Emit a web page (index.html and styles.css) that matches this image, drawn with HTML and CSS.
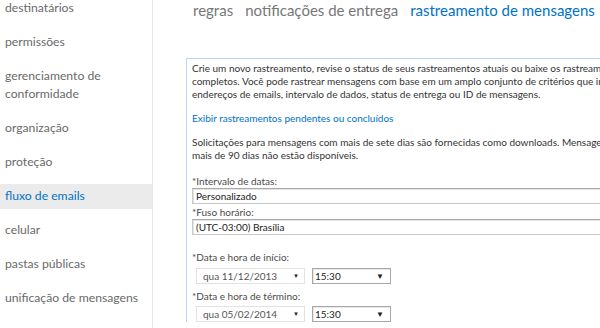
FILE: index.html
```html
<!DOCTYPE html>
<html lang="pt-BR">
  <head>
    <meta charset="UTF-8" />
    <meta name="viewport" content="width=device-width, initial-scale=1.0" />
    <title>fluxo de emails - rastreamento de mensagens</title>
    <link rel="stylesheet" href="styles.css">
  </head>
  <body>
    <div class="page">
      <nav class="sidebar">
        <ul class="nav-list">
          <li class="nav-item">destinatários</li>
          <li class="nav-item">permissões</li>
          <li class="nav-item">gerenciamento de conformidade</li>
          <li class="nav-item">organização</li>
          <li class="nav-item">proteção</li>
          <li class="nav-item selected">fluxo de emails</li>
          <li class="nav-item">celular</li>
          <li class="nav-item">pastas públicas</li>
          <li class="nav-item">unificação de mensagens</li>
        </ul>
      </nav>

      <main class="content">
        <div class="tabs">
          <span class="tab">regras</span>
          <span class="tab">notificações de entrega</span>
          <span class="tab active">rastreamento de mensagens</span>
        </div>

        <div class="panel">
          <p>Crie um novo rastreamento, revise o status de seus rastreamentos atuais ou baixe os rastreamentos completos. Você pode rastrear mensagens com base em um amplo conjunto de critérios que incluem endereços de emails, intervalo de dados, status de entrega ou ID de mensagens.</p>

          <p><a href="#" class="link">Exibir rastreamentos pendentes ou concluídos</a></p>

          <p>Solicitações para mensagens com mais de sete dias são fornecidas como downloads. Mensagens com mais de 90 dias não estão disponíveis.</p>

          <div class="field">
            <label>*Intervalo de datas:</label>
            <div class="textbox">Personalizado</div>
          </div>

          <div class="field">
            <label>*Fuso horário:</label>
            <div class="textbox">(UTC-03:00) Brasília</div>
          </div>

          <div class="field date-field first">
            <label>*Data e hora de início:</label>
            <div class="date-row">
              <div class="dropdown date">qua 11/12/2013<span class="arrow small">&#9660;</span></div>
              <div class="dropdown time">15:30<span class="arrow">&#9660;</span></div>
            </div>
          </div>

          <div class="field date-field">
            <label>*Data e hora de término:</label>
            <div class="date-row">
              <div class="dropdown date">qua 05/02/2014<span class="arrow small">&#9660;</span></div>
              <div class="dropdown time">15:30<span class="arrow">&#9660;</span></div>
            </div>
          </div>
        </div>
      </main>
    </div>
  </body>
</html>
```

FILE: styles.css
```css
body {
  margin: 0;
  font-family: Lato, "Open Sans", sans-serif;
  background-color: white;
  overflow: hidden;
}
.page {
  display: flex;
  height: 328px;
  overflow: hidden;
}
.sidebar {
  width: 152px;
  flex-shrink: 0;
  border-right: 1px solid #e6e6e6;
}
.nav-list {
  list-style: none;
  margin: -4.5px 0 0 0;
  padding: 0;
}
.nav-item {
  padding: 3.5px 4px 3.5px 5px;
  margin-bottom: 9px;
  font-size: 12.2px;
  line-height: 18px;
  color: #6a6a6a;
}
.nav-item.selected {
  background-color: #ebebeb;
  color: #0072c6;
}
.content {
  flex: 1;
  min-width: 0;
  overflow: hidden;
  padding-left: 33px;
}
.tabs {
  display: flex;
  gap: 12px;
  padding-left: 7px;
  height: 20px;
  line-height: 20px;
  font-size: 15px;
  white-space: nowrap;
}
.tab {
  color: #777;
}
.tab.active {
  color: #0072c6;
}
.panel {
  margin-top: 38px;
  width: 448px;
  padding: 3px 0 0 5px;
  border-top: 1px solid #bcd6ef;
  border-left: 1px solid #bcd6ef;
  font-size: 10px;
  line-height: 13px;
  color: #333;
}
.panel p {
  margin: 0 0 11px 0;
}
.link {
  color: #0072c6;
  text-decoration: none;
}
.field {
  margin-top: 12px;
}
.field + .field {
  margin-top: 1px;
}
.field.date-field {
  margin-top: 5px;
}
.field.date-field.first {
  margin-top: 15px;
}
.field label {
  display: block;
  color: #4a4a4a;
  line-height: 14px;
}
.textbox {
  height: 14px;
  line-height: 14px;
  padding: 0 3px;
  border: 1px solid #c8c8c8;
  border-top-color: #a9a9a9;
  box-shadow: inset 1px 1px 0 #e4e4e4;
  color: #222;
  white-space: nowrap;
}
.date-row {
  display: flex;
  gap: 7px;
  padding-left: 4px;
  margin-top: 3.5px;
}
.dropdown {
  display: flex;
  justify-content: space-between;
  align-items: center;
  height: 14px;
  line-height: 14px;
  color: #555;
}
.dropdown.date {
  width: 96px;
  padding: 0 5px 0 6px;
  border: 1px solid #e2e2e2;
}
.dropdown.time {
  width: 69px;
  padding: 0 6px 0 2px;
  border: 1px solid #a8a8a8;
  box-shadow: inset 1px 1px 0 #e8e8e8;
  color: #222;
}
.arrow {
  font-size: 8px;
  color: #222;
}
.arrow.small {
  font-size: 6px;
}
```
